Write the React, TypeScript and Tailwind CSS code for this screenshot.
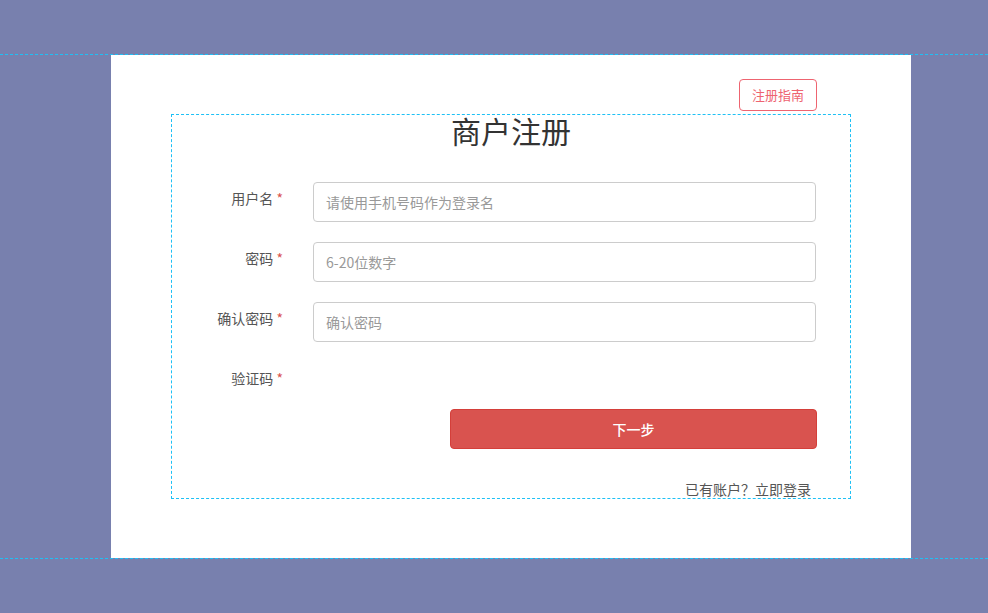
import React from 'react';

const fields = [
  { label: '用户名', placeholder: '请使用手机号码作为登录名', type: 'text' },
  { label: '密码', placeholder: '6-20位数字', type: 'password' },
  { label: '确认密码', placeholder: '确认密码', type: 'password' },
];

export default function App() {
  return (
    <div
      className="min-h-[613px] bg-[#7880ae] pt-[54px]"
      style={{ fontFamily: '"Noto Sans CJK SC", "Noto Sans", sans-serif' }}
    >
      <div className="border-y border-dashed border-[#1ec0f5]">
        <div className="relative ml-[111px] w-[800px] h-[503px] bg-white pt-[59px] pl-[60px]">
          <button className="absolute left-[628px] top-[24px] w-[78px] h-[32px] border border-[#ee6470] rounded-[4px] text-[13px] text-[#ee6470] bg-white">
            注册指南
          </button>

          <div className="w-[680px] h-[385px] border border-dashed border-[#1ec0f5]">
            <h1 className="text-center text-[30px] leading-[30px] text-[#333]">商户注册</h1>

            <form className="mt-[37px]" onSubmit={e => e.preventDefault()}>
              {fields.map(f => (
                <div key={f.label} className="flex items-start mb-[20px]">
                  <label className="w-[111px] pt-[6px] text-right text-[14px] leading-[20px] text-[#555]">
                    {f.label} <span className="text-[#d9534f]">*</span>
                  </label>
                  <input
                    type={f.type}
                    placeholder={f.placeholder}
                    className="ml-[30px] w-[503px] h-[40px] px-[12px] border border-[#ccc] rounded-[4px] text-[14px] text-[#555] placeholder:text-[#999] outline-none"
                  />
                </div>
              ))}

              <div className="flex items-start">
                <label className="w-[111px] pt-[6px] pb-[2px] text-right text-[14px] leading-[20px] text-[#555]">
                  验证码 <span className="text-[#d9534f]">*</span>
                </label>
              </div>

              <button
                type="submit"
                className="mt-[19px] ml-[278px] w-[367px] h-[40px] bg-[#d9534f] border border-[#d43f3a] rounded-[4px] text-white text-[14px] font-medium"
              >
                下一步
              </button>

              <div className="mt-[30px] pr-[39px] text-right text-[14px] leading-[20px] text-[#555]">
                已有账户？立即登录
              </div>
            </form>
          </div>
        </div>
      </div>
    </div>
  );
}
